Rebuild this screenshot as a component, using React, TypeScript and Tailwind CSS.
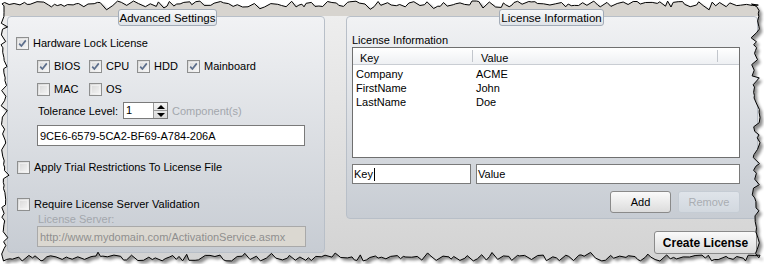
import React from 'react';

// torn paper edge around the captured window
function tornEdge(): [number, number][] {
    let s = 7;
    const rnd = () => {
        s = (s * 9301 + 49297) % 233280;
        return s / 233280;
    };
    const pts: [number, number][] = [];
    const W = 760, H = 261;
    for (let x = 2; x < W; x += 2 + rnd() * 5) pts.push([x, 1 + rnd() * 6 + (rnd() > 0.85 ? 3 : 0)]);
    for (let y = 4; y < H; y += 2 + rnd() * 5) pts.push([W - rnd() * 7 - (rnd() > 0.85 ? 3 : 0), y]);
    for (let x = W; x > 2; x -= 2 + rnd() * 5) pts.push([x, H - rnd() * 6 - (rnd() > 0.85 ? 3 : 0)]);
    for (let y = H; y > 4; y -= 2 + rnd() * 5) pts.push([1 + rnd() * 6 + (rnd() > 0.85 ? 2 : 0), y]);
    return pts;
}

function Check({ checked }: { checked?: boolean }) {
    return (
        <span className="relative inline-block w-[13px] h-[13px] shrink-0 border border-[#8e8f8f] bg-gradient-to-br from-[#d6d6d6] to-[#f7f7f7]">
            <span className="absolute inset-[1px] border border-[#f4f4f4]/70" />
            {checked && (
                <svg width="11" height="11" viewBox="0 0 11 11" className="absolute left-0 top-0">
                    <path d="M2.2 5.6 L4.4 8 L8.8 2.4" stroke="#5d6f8c" strokeWidth="1.7" fill="none" />
                </svg>
            )}
        </span>
    );
}

function CheckItem({ checked, label, className = '' }: { checked?: boolean; label: string; className?: string }) {
    return (
        <label className={`flex items-center gap-[4px] h-[14px] ${className}`}>
            <Check checked={checked} />
            <span>{label}</span>
        </label>
    );
}

function Legend({ title, className }: { title: string; className: string }) {
    return (
        <div className={`absolute top-[-8px] h-[17px] flex items-center justify-center rounded-[3px] border border-[#a3acb8] bg-gradient-to-b from-[#f7f8f9] to-[#dfe3e8] text-[11.5px] ${className}`}>
            {title}
        </div>
    );
}

function Button({ children, disabled, className = '' }: { children: React.ReactNode; disabled?: boolean; className?: string }) {
    return (
        <button
            className={`flex items-center justify-center rounded-[3px] border ${disabled ? 'border-[#c5ccd4] bg-gradient-to-b from-[#dfe4ea] to-[#d2d8df] text-[#a9adb2]' : 'border-[#8a8a8a] bg-gradient-to-b from-[#fafafa] to-[#dcdcdc] text-black'} ${className}`}
        >
            {children}
        </button>
    );
}

const rows = [
    ['Company', 'ACME'],
    ['FirstName', 'John'],
    ['LastName', 'Doe'],
];

export default function App() {
    const pts = tornEdge();
    const poly = pts.map((p) => `${p[0].toFixed(1)},${p[1].toFixed(1)}`).join(' ');
    const clip = `polygon(${pts.map((p) => `${p[0].toFixed(1)}px ${p[1].toFixed(1)}px`).join(',')})`;

    return (
        <div className="relative w-[764px] h-[264px] bg-white overflow-hidden text-[11px] leading-[14px] text-black whitespace-nowrap" style={{ fontFamily: '"Liberation Sans", Arial, sans-serif' }}>
            <svg width="764" height="264" className="absolute left-0 top-0">
                <defs>
                    <filter id="blur" x="-5%" y="-5%" width="110%" height="110%">
                        <feGaussianBlur stdDeviation="1.6" />
                    </filter>
                </defs>
                <polygon points={poly} transform="translate(3,3)" fill="#000" opacity="0.45" filter="url(#blur)" />
            </svg>

            <div
                className="relative w-[762px] h-[262px] flex gap-[21px] pl-[7px] pt-[16px] bg-[linear-gradient(to_bottom,#d7d4cf_0px,#d7d4cf_16px,#eeeeee_16px,#d3d3d3_100%)]"
                style={{ clipPath: clip }}
            >
                {/* Advanced Settings */}
                <div className="relative w-[318px] h-[237px] shrink-0 rounded-[4px] border border-[#b8bfc8] bg-gradient-to-b from-[#f1f2f4] to-[#c7ccd3] pl-[8px] pt-[19px]">
                    <Legend title="Advanced Settings" className="left-[110px] w-[99px]" />
                    <CheckItem checked label="Hardware Lock License" />

                    <div className="pl-[21px]">
                        <div className="flex mt-[9px]">
                            <CheckItem checked label="BIOS" className="w-[52px]" />
                            <CheckItem checked label="CPU" className="w-[48px]" />
                            <CheckItem checked label="HDD" className="w-[50px]" />
                            <CheckItem checked label="Mainboard" />
                        </div>
                        <div className="flex mt-[9px]">
                            <CheckItem label="MAC" className="w-[52px]" />
                            <CheckItem label="OS" />
                        </div>
                        <div className="flex items-center mt-[6px] h-[17px]">
                            <span className="pl-[1px] w-[86px]">Tolerance Level:</span>
                            <div className="flex h-[17px] border border-[#7a7a7a] bg-white">
                                <span className="w-[29px] pl-[2px] leading-[15px]">1</span>
                                <div className="w-[14px] flex flex-col border-l border-[#9a9a9a] bg-gradient-to-b from-[#f4f4f4] to-[#d9d9d9]">
                                    <div className="flex-1 flex items-center justify-center border-b border-[#9a9a9a]">
                                        <svg width="8" height="4" viewBox="0 0 8 4"><path d="M0 4 L4 0 L8 4 Z" fill="#000" /></svg>
                                    </div>
                                    <div className="flex-1 flex items-center justify-center">
                                        <svg width="8" height="4" viewBox="0 0 8 4"><path d="M0 0 L8 0 L4 4 Z" fill="#000" /></svg>
                                    </div>
                                </div>
                            </div>
                            <span className="ml-[4px] text-[#a3a7ad]">Component(s)</span>
                        </div>
                        <div className="mt-[6px] w-[268px] h-[21px] border border-[#7a7a7a] bg-white pl-[2px] flex items-center">
                            9CE6-6579-5CA2-BF69-A784-206A
                        </div>
                    </div>

                    <CheckItem label="Apply Trial Restrictions To License File" className="mt-[14px] ml-[1px]" />
                    <CheckItem label="Require License Server Validation" className="mt-[23px] ml-[1px]" />

                    <div className="pl-[21px]">
                        <div className="mt-[3px] pl-[1px] h-[11px] leading-[11px] text-[#a3a7ad]">License Server:</div>
                        <div className="mt-[1px] w-[269px] h-[21px] border border-[#a9a9a9] bg-[#dbd8d1] pl-[2px] flex items-center text-[#8f8f8f]">
                            http://www.mydomain.com/ActivationService.asmx
                        </div>
                    </div>
                </div>

                {/* License Information */}
                <div className="w-[412px] shrink-0 flex flex-col">
                    <div className="relative h-[203px] rounded-[4px] border border-[#b8bfc8] bg-gradient-to-b from-[#f1f2f4] to-[#c7ccd3] pl-[5px] pt-[16px]">
                        <Legend title="License Information" className="left-[152px] w-[105px]" />
                        <div className="h-[14px]">License Information</div>

                        <div className="w-[388px] h-[111px] border border-[#6f6f6f] bg-white">
                            <div className="flex h-[17px] border-b border-[#c9cdd3] bg-gradient-to-b from-white to-[#eef0f3]">
                                <div className="w-[120px] pl-[7px] pt-[2px] border-r border-[#c2c6cc] my-[2px] leading-[12px]">Key</div>
                                <div className="w-[245px] pl-[8px] pt-[2px] border-r border-[#c2c6cc] my-[2px] leading-[12px]">Value</div>
                            </div>
                            <div className="pt-[2px]">
                                {rows.map(([k, v]) => (
                                    <div key={k} className="flex h-[14px]">
                                        <span className="w-[123px] pl-[3px]">{k}</span>
                                        <span>{v}</span>
                                    </div>
                                ))}
                            </div>
                        </div>

                        <div className="flex gap-[5px] mt-[6px]">
                            <div className="w-[119px] h-[20px] border border-[#7a7a7a] bg-white pl-[1px] flex items-center">
                                Key<span className="inline-block w-[1px] h-[13px] bg-black ml-[1px]" />
                            </div>
                            <div className="w-[264px] h-[20px] border border-[#7a7a7a] bg-white pl-[1px] flex items-center">Value</div>
                        </div>
                        <div className="flex justify-end gap-[7px] mt-[7px] pr-[17px]">
                            <Button className="w-[61px] h-[22px]">Add</Button>
                            <Button disabled className="w-[62px] h-[22px]">Remove</Button>
                        </div>
                    </div>

                    <div className="flex justify-end mt-[12px] pr-[1px]">
                        <Button className="w-[103px] h-[23px] font-bold text-[12px]">Create License</Button>
                    </div>
                </div>
            </div>

            <svg width="764" height="264" className="absolute left-0 top-0 pointer-events-none">
                <polygon points={poly} fill="none" stroke="#000" strokeWidth="1" />
            </svg>
        </div>
    );
}
